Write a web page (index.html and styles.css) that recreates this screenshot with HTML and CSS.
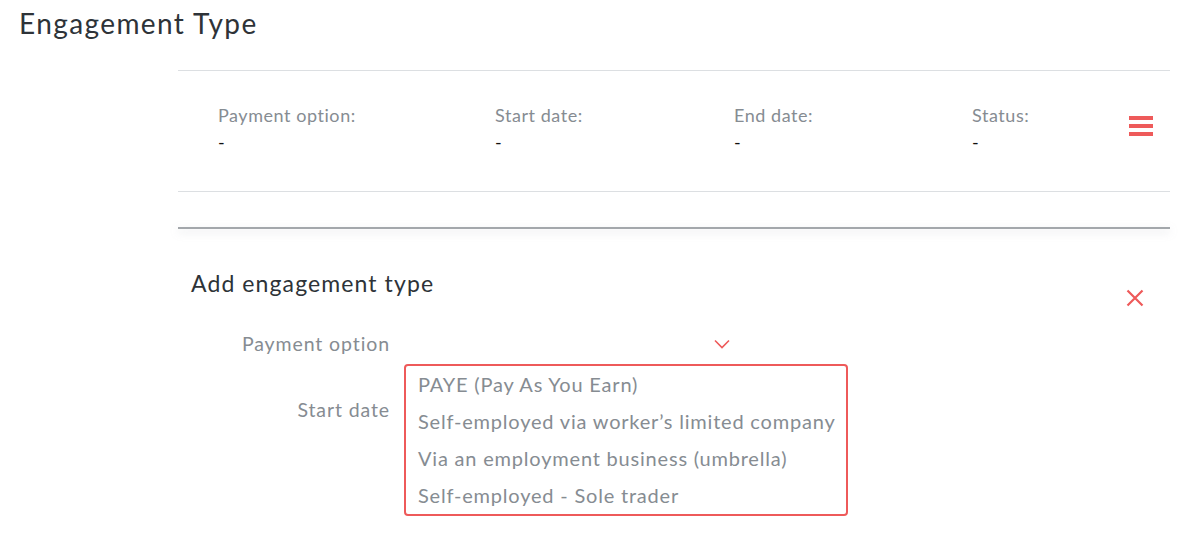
FILE: index.html
```html
<!DOCTYPE html>
<html>
<head>
<meta charset="utf-8">
<link rel="stylesheet" href="styles.css">
</head>
<body>
<h1 class="title">Engagement Type</h1>
<div class="panel">
  <div class="summary">
    <div class="field f1"><div class="label">Payment option:</div><div class="value">-</div></div>
    <div class="field f2"><div class="label">Start date:</div><div class="value">-</div></div>
    <div class="field f3"><div class="label">End date:</div><div class="value">-</div></div>
    <div class="field f4"><div class="label">Status:</div><div class="value">-</div></div>
    <div class="menu">
      <svg width="24" height="20" viewBox="0 0 24 20"><rect x="0" y="0" width="24" height="4" fill="#ee5a5a"/><rect x="0" y="8" width="24" height="4" fill="#ee5a5a"/><rect x="0" y="16" width="24" height="4" fill="#ee5a5a"/></svg>
    </div>
  </div>
  <div class="divider"></div>
  <div class="form">
    <div class="form-head">
      <h2 class="form-title">Add engagement type</h2>
      <button class="close" aria-label="Close">
        <svg width="18" height="18" viewBox="0 0 18 18"><path d="M1.5 1.5 L16.5 16.5 M16.5 1.5 L1.5 16.5" stroke="#ee5a5a" stroke-width="2.2" fill="none"/></svg>
      </button>
    </div>
    <div class="row">
      <div class="row-label">Payment option</div>
      <div class="select">
        <svg class="chev" width="16" height="10" viewBox="0 0 16 10"><path d="M1 1.5 L8 8.5 L15 1.5" stroke="#ee5a5a" stroke-width="1.6" fill="none"/></svg>
        <ul class="options">
          <li>PAYE (Pay As You Earn)</li>
          <li>Self-employed via worker’s limited company</li>
          <li>Via an employment business (umbrella)</li>
          <li>Self-employed - Sole trader</li>
        </ul>
      </div>
    </div>
    <div class="row row2">
      <div class="row-label">Start date</div>
      <div class="input"></div>
    </div>
  </div>
</div>
</body>
</html>
```
FILE: styles.css
```css
html, body {
  margin: 0;
  padding: 0;
  background: #ffffff;
}
body {
  font-family: Lato, "Open Sans", sans-serif;
  width: 1196px;
  height: 534px;
  overflow: hidden;
}
.title {
  margin: 0;
  padding: 5px 0 0 19px;
  font-size: 28px;
  font-weight: 400;
  color: #2e3338;
  line-height: 36px;
  letter-spacing: 1.4px;
}
.panel {
  margin: 29px 0 0 178px;
  width: 992px;
}
.summary {
  display: flex;
  align-items: flex-start;
  height: 122px;
  border-top: 1px solid #dcdfe2;
  border-bottom: 1px solid #dcdfe2;
  box-sizing: border-box;
  padding: 32px 0 0 40px;
}
.field .label {
  font-size: 18px;
  color: #868c92;
  line-height: 24px;
  letter-spacing: 0.55px;
}
.field .value {
  font-size: 18px;
  color: #111;
  line-height: 22px;
  margin-top: 4px;
}
.f1 { width: 277px; }
.f2 { width: 239px; }
.f3 { width: 238px; }
.f4 { width: 157px; }
.menu {
  padding-top: 13px;
  line-height: 0;
}
.divider {
  margin-top: 35px;
  height: 2px;
  background: #a3a7ab;
  box-shadow: 0 3px 8px rgba(150, 156, 162, 0.35);
}
.form {
  padding: 0 0 0 13px;
}
.form-head {
  display: flex;
  justify-content: space-between;
  align-items: flex-start;
  padding-top: 39px;
}
.form-title {
  margin: 0;
  font-size: 23px;
  font-weight: 400;
  color: #2e3338;
  line-height: 30px;
  letter-spacing: 1.1px;
}
.close {
  border: 0;
  background: none;
  padding: 0;
  margin: 21px 26px 0 0;
  line-height: 0;
}
.row {
  display: flex;
  align-items: center;
  height: 30px;
  margin-top: 21px;
}
.row2 {
  margin-top: 36px;
}
.row-label {
  width: 199px;
  text-align: right;
  font-size: 19.5px;
  color: #868c92;
  letter-spacing: 0.9px;
}
.select {
  position: relative;
  margin-left: 14px;
  width: 334px;
  height: 30px;
}
.chev {
  position: absolute;
  right: 8px;
  top: 11px;
}
.options {
  position: absolute;
  left: 0;
  top: 36px;
  width: 444px;
  box-sizing: border-box;
  margin: 0;
  padding: 0;
  list-style: none;
  border: 2px solid #ee5a5a;
  border-radius: 4px;
  background: #fff;
  z-index: 2;
}
.options li {
  padding-left: 12px;
  font-size: 20px;
  color: #868c92;
  line-height: 37px;
  letter-spacing: 0.8px;
  white-space: nowrap;
}
.input {
  margin-left: 14px;
}
```
